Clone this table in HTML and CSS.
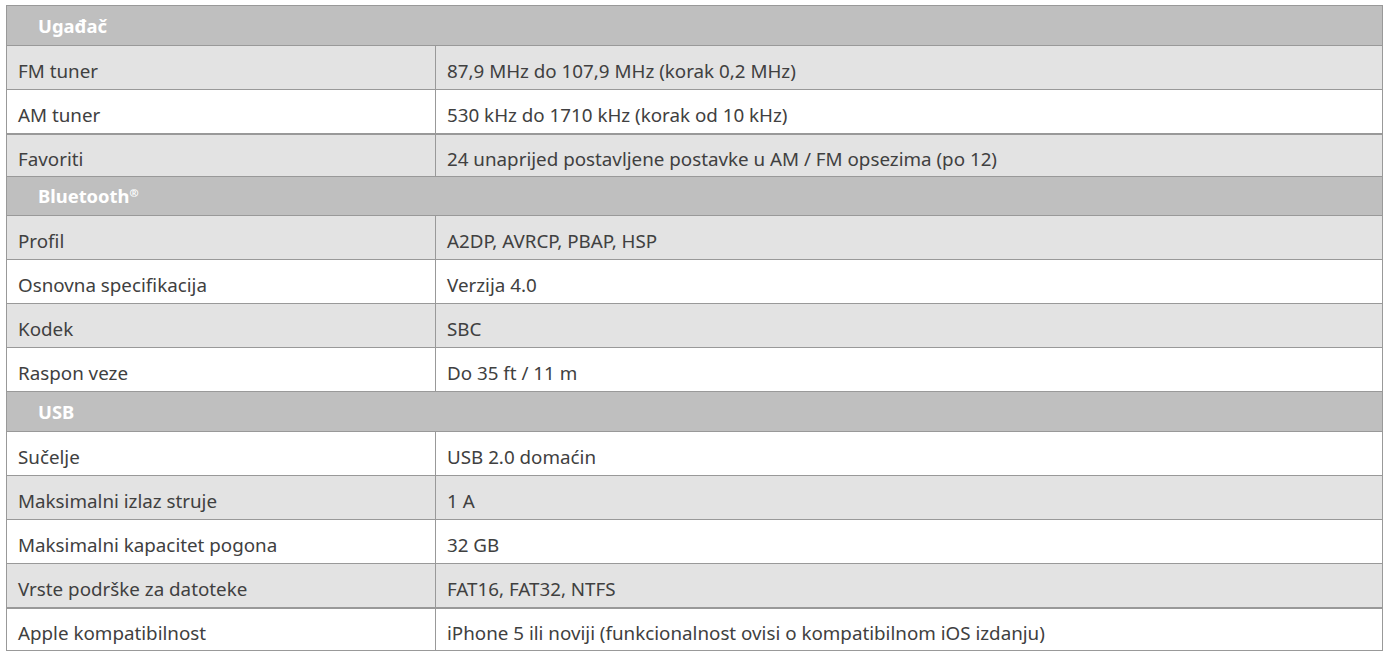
FILE: index.html
```html
<!DOCTYPE html>
<html lang="hr">
<head>
<meta charset="utf-8">
<title>Specifikacije</title>
<link rel="stylesheet" href="styles.css">
</head>
<body>
<table class="spec">
  <colgroup><col class="c1"><col class="c2"></colgroup>
  <tr class="head"><th colspan="2">Ugađač</th></tr>
  <tr class="grey"><td>FM tuner</td><td>87,9 MHz do 107,9 MHz (korak 0,2 MHz)</td></tr>
  <tr class="white"><td>AM tuner</td><td>530 kHz do 1710 kHz (korak od 10 kHz)</td></tr>
  <tr class="grey thick"><td>Favoriti</td><td>24 unaprijed postavljene postavke u AM / FM opsezima (po 12)</td></tr>
  <tr class="head short"><th colspan="2">Bluetooth<sup>®</sup></th></tr>
  <tr class="grey"><td>Profil</td><td>A2DP, AVRCP, PBAP, HSP</td></tr>
  <tr class="white"><td>Osnovna specifikacija</td><td>Verzija 4.0</td></tr>
  <tr class="grey"><td>Kodek</td><td>SBC</td></tr>
  <tr class="white"><td>Raspon veze</td><td>Do 35 ft / 11 m</td></tr>
  <tr class="head"><th colspan="2">USB</th></tr>
  <tr class="white"><td>Sučelje</td><td>USB 2.0 domaćin</td></tr>
  <tr class="grey"><td>Maksimalni izlaz struje</td><td>1 A</td></tr>
  <tr class="white"><td>Maksimalni kapacitet pogona</td><td>32 GB</td></tr>
  <tr class="grey"><td>Vrste podrške za datoteke</td><td>FAT16, FAT32, NTFS</td></tr>
  <tr class="white thick"><td>Apple kompatibilnost</td><td>iPhone 5 ili noviji (funkcionalnost ovisi o kompatibilnom iOS izdanju)</td></tr>
</table>
</body>
</html>
```
FILE: styles.css
```css
html, body {
  margin: 0;
  padding: 0;
  background: #ffffff;
}
body {
  padding: 5px 0 0 6px;
  font-family: "Noto Sans", "Open Sans", sans-serif;
  font-size: 18.8px;
  color: #404040;
}
.spec {
  border-collapse: collapse;
  width: 1377px;
  border: 1px solid #999999;
}
.c1 { width: 429px; }
.spec th {
  background: #bfbfbf;
  color: #ffffff;
  font-weight: 700;
  text-align: left;
  height: 39px;
  padding: 0 0 0 31px;
  border: 1px solid #999999;
  font-size: 18.4px;
  line-height: 22px;
}
.short th { height: 38px; }
.spec th sup {
  font-size: 11px;
  vertical-align: 6px;
  line-height: 0;
}
.spec td {
  height: 37px;
  padding: 6px 11px 0;
  border: 1px solid #999999;
  vertical-align: middle;
  line-height: 24px;
}
.grey td { background: #e3e3e3; }
.white td { background: #ffffff; }
.thick td { border-top: 2px solid #999999; height: 35px; }
```
